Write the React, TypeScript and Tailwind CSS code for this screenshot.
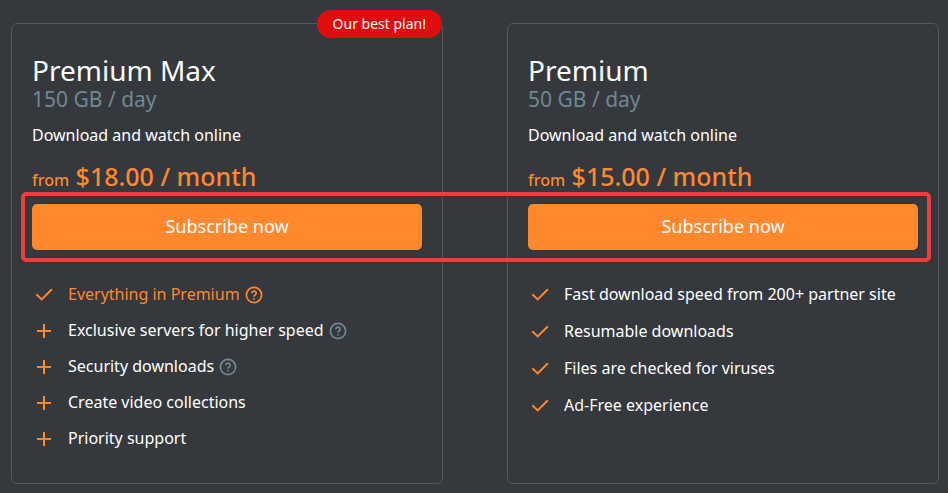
type Feature = {
  text: string;
  icon: "check" | "plus";
  help?: boolean;
  highlighted?: boolean;
};

type Plan = {
  name: string;
  quota: string;
  price: string;
  badge?: string;
  listGap: string;
  features: Feature[];
};

const plans: Plan[] = [
  {
    name: "Premium Max",
    quota: "150 GB / day",
    price: "$18.00 / month",
    badge: "Our best plan!",
    listGap: "gap-3",
    features: [
      { text: "Everything in Premium", icon: "check", help: true, highlighted: true },
      { text: "Exclusive servers for higher speed", icon: "plus", help: true },
      { text: "Security downloads", icon: "plus", help: true },
      { text: "Create video collections", icon: "plus" },
      { text: "Priority support", icon: "plus" },
    ],
  },
  {
    name: "Premium",
    quota: "50 GB / day",
    price: "$15.00 / month",
    listGap: "gap-[13px]",
    features: [
      { text: "Fast download speed from 200+ partner site", icon: "check" },
      { text: "Resumable downloads", icon: "check" },
      { text: "Files are checked for viruses", icon: "check" },
      { text: "Ad-Free experience", icon: "check" },
    ],
  },
];

function FeatureIcon({ kind }: { kind: "check" | "plus" }) {
  return (
    <svg viewBox="0 0 24 24" className="size-6 shrink-0 text-[#ff872e]" fill="none" stroke="currentColor" strokeWidth="2" aria-hidden="true">
      {kind === "check" ? <path d="M4.3 12.2 9.7 17.4 19.9 7.2" /> : <path d="M12 6v14M5 13h14" />}
    </svg>
  );
}

function HelpButton({ highlighted }: { highlighted?: boolean }) {
  return (
    <button type="button" aria-label="More information" className={highlighted ? "text-[#ff872e]" : "text-[#6f8894]"}>
      <svg viewBox="0 0 18 18" className="mt-[2px] block size-[18px]" fill="none" stroke="currentColor" strokeWidth="1.7" aria-hidden="true">
        <circle cx="9" cy="9" r="7.6" />
        <path d="M6.8 7.3a2.2 2.1 0 1 1 3.5 1.6c-.8.6-1.3.8-1.3 1.9" />
        <path d="M9 11.9v1.6" />
      </svg>
    </button>
  );
}

function PlanCard({ plan }: { plan: Plan }) {
  return (
    <section className="relative rounded-md border border-[#54585d] px-5 pt-7">
      {plan.badge && (
        <span className="absolute -top-[14px] right-0 flex h-7 items-center rounded-full bg-[#df0d0d] px-4 text-sm">
          {plan.badge}
        </span>
      )}
      <h2 className="text-[28px] leading-9">{plan.name}</h2>
      <p className="text-[21px] leading-[22px] text-[#6f8894]">{plan.quota}</p>
      <p className="mt-[13px] text-base leading-6">Download and watch online</p>
      <p className="mt-[13px] text-[25px] leading-8 font-medium text-[#ff872e]">
        <span className="text-base">from</span> {plan.price}
      </p>
      <button type="button" className="mt-3 h-[46px] w-full rounded-[5px] bg-[#ff872e] pb-[2px] text-lg">
        Subscribe now
      </button>
      <ul className={`mt-8 flex flex-col ${plan.listGap}`}>
        {plan.features.map((feature) => (
          <li key={feature.text} className="flex h-6 items-center gap-3">
            <FeatureIcon kind={feature.icon} />
            <span className={`flex items-center gap-[5px] text-base leading-6 whitespace-nowrap ${feature.highlighted ? "text-[#ff872e]" : ""}`}>
              {feature.text}
              {feature.help && <HelpButton highlighted={feature.highlighted} />}
            </span>
          </li>
        ))}
      </ul>
    </section>
  );
}

export default function App() {
  return (
    <main className="flex min-h-screen flex-col bg-[#35383d] pt-[23px] pr-[9px] pb-[9px] pl-[11px] font-['Noto_Sans',sans-serif] text-white">
      <div className="relative grid flex-1 grid-cols-2 gap-16">
        {plans.map((plan) => (
          <PlanCard key={plan.name} plan={plan} />
        ))}
        <div className="pointer-events-none absolute top-[169px] right-2 left-[10px] h-[70px] rounded-[5px] border-4 border-[#f13b3d] shadow-[0_1px_1px_#5c2529,inset_0_1px_1px_#5c2529]" />
      </div>
    </main>
  );
}
